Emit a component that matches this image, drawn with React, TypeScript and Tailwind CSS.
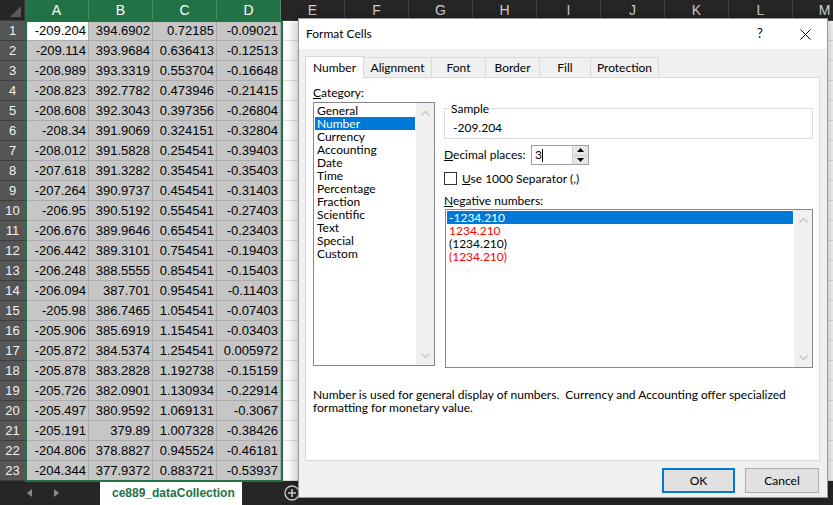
import { ReactNode } from "react";

const data: string[][] = [
  ["-209.204", "394.6902", "0.72185", "-0.09021"],
  ["-209.114", "393.9684", "0.636413", "-0.12513"],
  ["-208.989", "393.3319", "0.553704", "-0.16648"],
  ["-208.823", "392.7782", "0.473946", "-0.21415"],
  ["-208.608", "392.3043", "0.397356", "-0.26804"],
  ["-208.34", "391.9069", "0.324151", "-0.32804"],
  ["-208.012", "391.5828", "0.254541", "-0.39403"],
  ["-207.618", "391.3282", "0.354541", "-0.35403"],
  ["-207.264", "390.9737", "0.454541", "-0.31403"],
  ["-206.95", "390.5192", "0.554541", "-0.27403"],
  ["-206.676", "389.9646", "0.654541", "-0.23403"],
  ["-206.442", "389.3101", "0.754541", "-0.19403"],
  ["-206.248", "388.5555", "0.854541", "-0.15403"],
  ["-206.094", "387.701", "0.954541", "-0.11403"],
  ["-205.98", "386.7465", "1.054541", "-0.07403"],
  ["-205.906", "385.6919", "1.154541", "-0.03403"],
  ["-205.872", "384.5374", "1.254541", "0.005972"],
  ["-205.878", "383.2828", "1.192738", "-0.15159"],
  ["-205.726", "382.0901", "1.130934", "-0.22914"],
  ["-205.497", "380.9592", "1.069131", "-0.3067"],
  ["-205.191", "379.89", "1.007328", "-0.38426"],
  ["-204.806", "378.8827", "0.945524", "-0.46181"],
  ["-204.344", "377.9372", "0.883721", "-0.53937"],
];

const selectedCols = ["A", "B", "C", "D"];
const otherCols = ["E", "F", "G", "H", "I", "J", "K", "L", "M"];

const categories = [
  "General",
  "Number",
  "Currency",
  "Accounting",
  "Date",
  "Time",
  "Percentage",
  "Fraction",
  "Scientific",
  "Text",
  "Special",
  "Custom",
];

const tabs = [
  { label: "Number", w: "w-[59px]" },
  { label: "Alignment", w: "w-[69px]" },
  { label: "Font", w: "w-[55px]" },
  { label: "Border", w: "w-[55px]" },
  { label: "Fill", w: "w-[52px]" },
  { label: "Protection", w: "w-[69px]" },
];

function Chevron({ up }: { up?: boolean }) {
  return (
    <svg width="9" height="6" viewBox="0 0 9 6" className="text-[#c4c4c4]">
      <path
        d={up ? "M0.5 5.5 L4.5 1.5 L8.5 5.5" : "M0.5 0.5 L4.5 4.5 L8.5 0.5"}
        fill="none"
        stroke="currentColor"
        strokeWidth="1.4"
      />
    </svg>
  );
}

function ScrollBar() {
  return (
    <div className="w-[18px] shrink-0 bg-[#f0f0f0] flex flex-col items-center justify-between pt-[7px] pb-[6px]">
      <Chevron up />
      <Chevron />
    </div>
  );
}

function Tab({ label, w, active }: { label: string; w: string; active?: boolean }) {
  if (active) {
    return (
      <div className={`${w} h-[22px] relative z-10 -mb-px bg-white border border-b-0 border-[#d9d9d9] flex items-center justify-center`}>
        {label}
      </div>
    );
  }
  return (
    <div className={`${w} h-[20px] -ml-px bg-[#f0f0f0] border border-b-0 border-[#d9d9d9] flex items-center justify-center`}>
      {label}
    </div>
  );
}

function Button({ children, primary }: { children: ReactNode; primary?: boolean }) {
  return (
    <div
      className={
        primary
          ? "w-[73px] h-[25px] bg-[#e1e1e1] border-2 border-[#0078d7] flex items-center justify-center"
          : "w-[74px] h-[25px] bg-[#e1e1e1] border border-[#adadad] flex items-center justify-center"
      }
    >
      {children}
    </div>
  );
}

function FormatCells() {
  return (
    <div className="absolute left-[298px] top-[18px] w-[530px] h-[480px] flex flex-col bg-[#f0f0f0] border border-[#9a9a9a] shadow-[0_0_14px_rgba(0,0,0,0.35)] font-['Segoe_UI',Lato,sans-serif] text-[12px] text-black">
      {/* title bar */}
      <div className="h-[30px] shrink-0 bg-white flex items-center pl-[7px] pr-[7px]">
        <span>Format Cells</span>
        <span className="ml-auto w-[30px] text-center text-[13px]">?</span>
        <span className="ml-[15px] w-[30px] flex justify-center">
          <svg width="11" height="11" viewBox="0 0 11 11">
            <path d="M0.5 0.5 L10.5 10.5 M10.5 0.5 L0.5 10.5" stroke="#000" strokeWidth="1" />
          </svg>
        </span>
      </div>

      <div className="flex-1 pl-[6px] pt-[6px]">
        {/* tabs */}
        <div className="flex items-end h-[22px]">
          {tabs.map((t, i) => (
            <Tab key={t.label} label={t.label} w={t.w} active={i === 0} />
          ))}
        </div>

        {/* panel */}
        <div className="w-[515px] h-[384px] bg-white border border-[#d9d9d9] pl-[7px] pt-[7px]">
          <div className="flex">
            {/* category */}
            <div className="w-[122px] shrink-0">
              <div className="leading-[16px]">
                <u>C</u>ategory:
              </div>
              <div className="mt-px h-[264px] border border-[#828790] flex">
                <div className="flex-1 p-px">
                  {categories.map((c) => (
                    <div
                      key={c}
                      className={
                        c === "Number"
                          ? "h-[13px] leading-[13px] pl-[2px] bg-[#0078d7] text-white"
                          : "h-[13px] leading-[13px] pl-[2px]"
                      }
                    >
                      {c}
                    </div>
                  ))}
                </div>
                <ScrollBar />
              </div>
            </div>

            {/* right side */}
            <div className="ml-[9px] w-[369px] pt-[17px]">
              <fieldset className="border border-[#dcdcdc] px-[8px] pb-[4px]">
                <legend className="ml-[-4px] px-[2px] leading-[13px]">Sample</legend>
                <div className="pt-[6px] leading-[13px]">-209.204</div>
              </fieldset>

              <div className="mt-[6px] flex items-center h-[20px]">
                <div className="w-[87px]">
                  <u>D</u>ecimal places:
                </div>
                <div className="w-[58px] h-[20px] border border-[#a0a0a0] bg-white flex">
                  <div className="flex-1 flex items-center pl-[3px]">
                    3<span className="inline-block w-px h-[13px] bg-black" />
                  </div>
                  <div className="w-[16px] flex flex-col border-l border-[#cfcfcf] bg-[#e6e6e6]">
                    <div className="flex-1 flex items-center justify-center border-b border-[#cfcfcf]">
                      <svg width="7" height="4" viewBox="0 0 7 4">
                        <path d="M0 4 L3.5 0 L7 4 Z" fill="#000" />
                      </svg>
                    </div>
                    <div className="flex-1 flex items-center justify-center">
                      <svg width="7" height="4" viewBox="0 0 7 4">
                        <path d="M0 0 L3.5 4 L7 0 Z" fill="#000" />
                      </svg>
                    </div>
                  </div>
                </div>
              </div>

              <div className="mt-[7px] flex items-center h-[13px]">
                <div className="w-[13px] h-[13px] border border-[#333] bg-white" />
                <span className="ml-[5px]">
                  <u>U</u>se 1000 Separator (,)
                </span>
              </div>

              <div className="mt-[9px] leading-[13px]">
                <u>N</u>egative numbers:
              </div>
              <div className="mt-[2px] ml-px w-[368px] h-[159px] border border-[#828790] flex">
                <div className="flex-1 p-px">
                  <div className="h-[13px] leading-[13px] pl-[2px] bg-[#0078d7] text-white">-1234.210</div>
                  <div className="h-[13px] leading-[13px] pl-[2px] text-[#ff0000]">1234.210</div>
                  <div className="h-[13px] leading-[13px] pl-[2px]">(1234.210)</div>
                  <div className="h-[13px] leading-[13px] pl-[2px] text-[#ff0000]">(1234.210)</div>
                </div>
                <ScrollBar />
              </div>
            </div>
          </div>

          <div className="mt-[20px] leading-[13px]">
            Number is used for general display of numbers.&nbsp; Currency and Accounting offer specialized
            <br />
            formatting for monetary value.
          </div>
        </div>

        {/* buttons */}
        <div className="w-[515px] mt-[7px] flex justify-end gap-[10px] pr-px">
          <Button primary>OK</Button>
          <Button>Cancel</Button>
        </div>
      </div>
    </div>
  );
}

export default function App() {
  return (
    <div className="relative w-[833px] h-[505px] overflow-hidden bg-white font-['Liberation_Sans',Arial,sans-serif]">
      {/* column headers */}
      <div className="flex h-[21px] bg-[#262626] border-b border-[#3a3a3a]">
        <div className="w-[25px] shrink-0 flex items-end justify-end p-[3px] border-r border-[#3a3a3a]">
          <svg width="11" height="11" viewBox="0 0 11 11">
            <path d="M11 0 L11 11 L0 11 Z" fill="#5a5a5a" />
          </svg>
        </div>
        {selectedCols.map((c) => (
          <div
            key={c}
            className="w-[64px] shrink-0 bg-[#217346] text-white text-[14px] flex items-center justify-center border-r border-[#4d8c68]"
          >
            {c}
          </div>
        ))}
        {otherCols.map((c) => (
          <div
            key={c}
            className="w-[64px] shrink-0 text-[#d2d2d2] text-[14px] flex items-center justify-center border-r border-[#444]"
          >
            {c}
          </div>
        ))}
      </div>

      {/* rows */}
      {data.map((row, i) => (
        <div key={i} className="flex h-[20px]">
          <div className="w-[25px] shrink-0 bg-[#555555] text-[#f2f2f2] text-[13px] flex items-center justify-center border-b border-[#3c3c3c]">
            {i + 1}
          </div>
          {row.map((v, j) => (
            <div
              key={j}
              className={
                i === 0 && j === 0
                  ? "w-[64px] shrink-0 bg-white border-r border-b border-[#ababab] text-right pr-[2px] text-[13px] leading-[19px] text-black"
                  : "w-[64px] shrink-0 bg-[#c6c6c6] border-r border-b border-[#ababab] text-right pr-[2px] text-[13px] leading-[19px] text-black"
              }
            >
              {v}
            </div>
          ))}
          {otherCols.map((c) => (
            <div key={c} className="w-[64px] shrink-0 border-r border-b border-[#e1e1e1]" />
          ))}
        </div>
      ))}

      {/* sheet tabs bar */}
      <div className="flex h-[24px] bg-[#262626]">
        <div className="w-[100px] shrink-0 flex items-center pl-[27px] gap-[22px]">
          <svg width="5" height="8" viewBox="0 0 5 8">
            <path d="M5 0 L0 4 L5 8 Z" fill="#8a8a8a" />
          </svg>
          <svg width="5" height="8" viewBox="0 0 5 8">
            <path d="M0 0 L5 4 L0 8 Z" fill="#8a8a8a" />
          </svg>
        </div>
        <div className="w-[142px] shrink-0 bg-white pl-[12px] flex items-center text-[12px] font-bold text-[#217346] whitespace-nowrap">
          ce889_dataCollection
        </div>
        <div className="ml-[42px] flex items-center">
          <svg width="16" height="16" viewBox="0 0 16 16">
            <circle cx="8" cy="8" r="7" fill="none" stroke="#d0d0d0" strokeWidth="1.3" />
            <path d="M8 4 V12 M4 8 H12" stroke="#d0d0d0" strokeWidth="1.6" />
          </svg>
        </div>
      </div>

      {/* selection outline */}
      <div className="absolute left-[25px] top-[20px] w-[258px] h-[462px] border-2 border-[#217346] pointer-events-none" />

      <FormatCells />
    </div>
  );
}
